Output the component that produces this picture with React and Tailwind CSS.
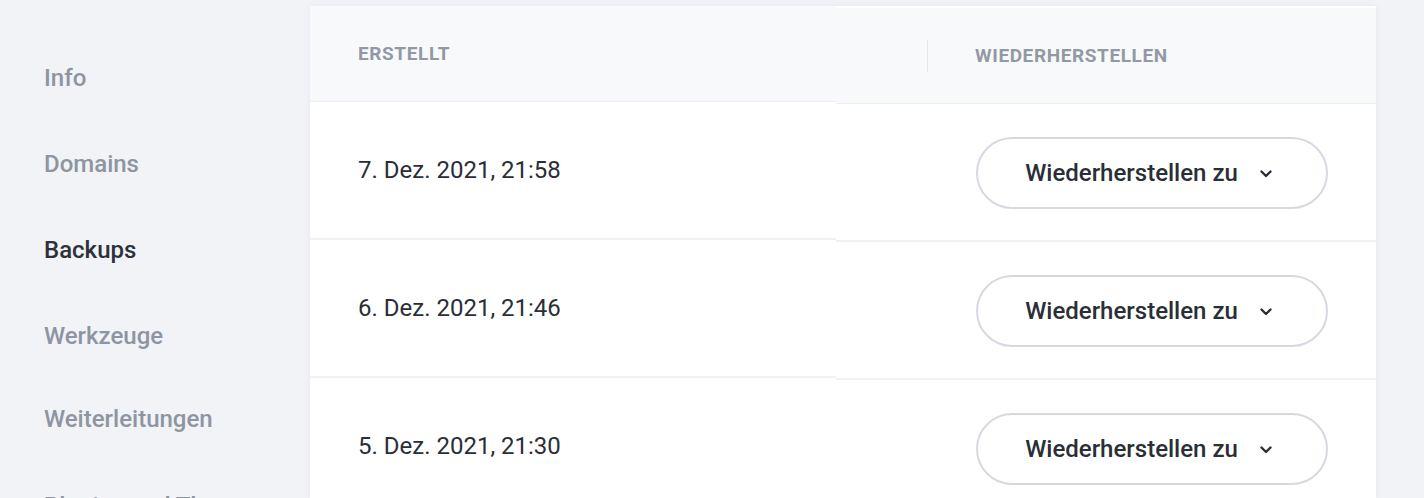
import React from 'react';

const navItems = [
  { label: 'Info', h: 'h-[86px]' },
  { label: 'Domains', h: 'h-[86px]' },
  { label: 'Backups', h: 'h-[86px]', active: true },
  { label: 'Werkzeuge', h: 'h-[86px]' },
  { label: 'Weiterleitungen', h: 'h-[80px]' },
  { label: 'Plugins und Themes', h: 'h-[94px]' },
];

const backups = ['7. Dez. 2021, 21:58', '6. Dez. 2021, 21:46', '5. Dez. 2021, 21:30'];

const Chevron = () => (
  <svg width="12" height="8" viewBox="0 0 12 8" fill="none" className="ml-[22px] mt-[2px]">
    <path d="M1.5 1.5l4.5 4.5 4.5-4.5" stroke="#2a2e36" strokeWidth="2.4" strokeLinecap="round" strokeLinejoin="round" />
  </svg>
);

const RestoreButton = () => (
  <button className="flex items-center justify-center w-[352px] h-[72px] rounded-full border-2 border-[#d5d9e1] bg-white text-[24px] font-medium text-[#2a2e36] pr-[7px]">
    Wiederherstellen zu
    <Chevron />
  </button>
);

const App = () => {
  return (
    <div
      className="flex w-full h-[498px] overflow-hidden bg-[#f1f3f7]"
      style={{ fontFamily: 'Roboto, "Noto Sans", sans-serif' }}
    >
      {/* sidebar */}
      <nav className="w-[310px] shrink-0 pt-[35px] pl-[44px]">
        {navItems.map((item) => (
          <div
            key={item.label}
            className={`${item.h} flex items-center text-[24px] font-medium whitespace-nowrap ${
              item.active ? 'text-[#2d3139]' : 'text-[#8e95a1]'
            }`}
          >
            {item.label}
          </div>
        ))}
      </nav>

      {/* backups table */}
      <div className="mt-[6px] w-[1066px] shrink-0 flex bg-white shadow-[0_0_8px_rgba(30,40,70,0.05)]">
        <div className="w-[526px] shrink-0">
          <div className="h-[96px] flex items-center pl-[48px] pt-[2px] bg-[#f8f9fb] border-b border-[#eceef3] text-[19px] font-bold text-[#9299a5] tracking-[0.6px]">
            ERSTELLT
          </div>
          {backups.map((date) => (
            <div
              key={date}
              className="h-[138px] flex items-center pl-[48px] border-b-2 border-[#f1f2f6] text-[24px] text-[#2a2e36]"
            >
              {date}
            </div>
          ))}
        </div>

        <div className="flex-1 mt-[2px]">
          <div className="h-[96px] flex items-center pl-[91px] bg-[#f8f9fb] border-b border-[#eceef3]">
            <div className="w-px h-[32px] bg-[#e3e6ec]" />
            <span className="pl-[47px] pt-[2px] text-[19px] font-bold text-[#9299a5] tracking-[0.6px]">
              WIEDERHERSTELLEN
            </span>
          </div>
          {backups.map((date) => (
            <div
              key={date}
              className="h-[138px] flex items-center pl-[140px] pt-[2px] border-b-2 border-[#f1f2f6]"
            >
              <RestoreButton />
            </div>
          ))}
        </div>
      </div>
    </div>
  );
};

export default App;
